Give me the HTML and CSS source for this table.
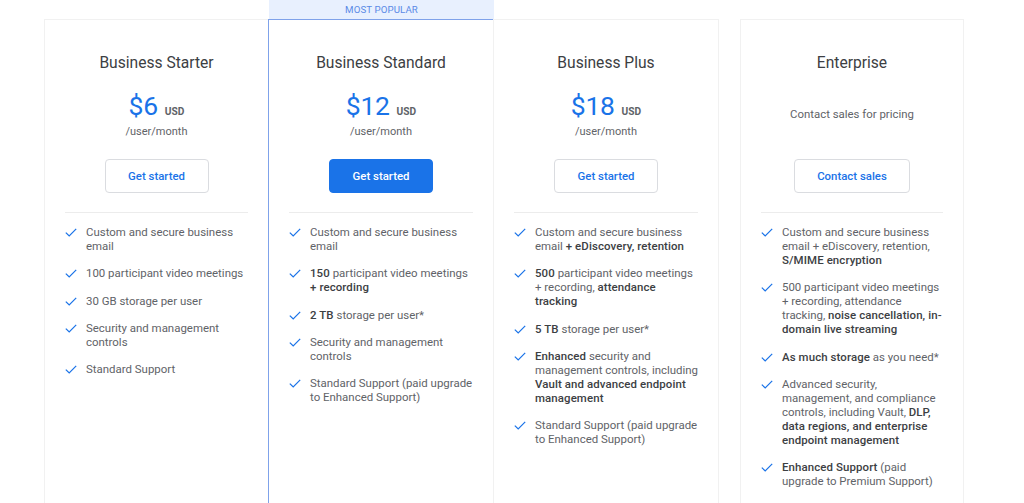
FILE: index.html
```html
<!DOCTYPE html>
<html lang="en">
<head>
<meta charset="utf-8">
<title>Plans</title>
<link rel="stylesheet" href="styles.css">
</head>
<body>
<svg width="0" height="0" class="defs" aria-hidden="true">
  <symbol id="chk" viewBox="0 0 12 9"><path d="M0.8 4.6 L4.2 7.9 L11.2 0.9" fill="none" stroke="#1a73e8" stroke-width="1.25"/></symbol>
</svg>
<main class="plans">
  <section class="col">
    <div class="flag"></div>
    <div class="card">
      <h2 class="title">Business Starter</h2>
      <div class="price"><div class="amount-row"><span class="amount">$6</span><span class="cur">USD</span></div><div class="per">/user/month</div></div>
      <a class="btn">Get started</a>
      <ul class="features">
        <li><svg class="check"><use href="#chk"/></svg><span>Custom and secure business email</span></li>
        <li><svg class="check"><use href="#chk"/></svg><span>100 participant video meetings</span></li>
        <li><svg class="check"><use href="#chk"/></svg><span>30 GB storage per user</span></li>
        <li><svg class="check"><use href="#chk"/></svg><span>Security and management controls</span></li>
        <li><svg class="check"><use href="#chk"/></svg><span>Standard Support</span></li>
      </ul>
    </div>
  </section>
  <section class="col popular">
    <div class="flag">MOST POPULAR</div>
    <div class="card">
      <h2 class="title">Business Standard</h2>
      <div class="price"><div class="amount-row"><span class="amount">$12</span><span class="cur">USD</span></div><div class="per">/user/month</div></div>
      <a class="btn primary">Get started</a>
      <ul class="features">
        <li><svg class="check"><use href="#chk"/></svg><span>Custom and secure business email</span></li>
        <li><svg class="check"><use href="#chk"/></svg><span><b>150</b> participant video meetings <b>+ recording</b></span></li>
        <li><svg class="check"><use href="#chk"/></svg><span><b>2 TB</b> storage per user*</span></li>
        <li><svg class="check"><use href="#chk"/></svg><span>Security and management controls</span></li>
        <li><svg class="check"><use href="#chk"/></svg><span>Standard Support (paid upgrade to Enhanced Support)</span></li>
      </ul>
    </div>
  </section>
  <section class="col">
    <div class="flag"></div>
    <div class="card">
      <h2 class="title">Business Plus</h2>
      <div class="price"><div class="amount-row"><span class="amount">$18</span><span class="cur">USD</span></div><div class="per">/user/month</div></div>
      <a class="btn">Get started</a>
      <ul class="features">
        <li><svg class="check"><use href="#chk"/></svg><span>Custom and secure business email <b>+ eDiscovery, retention</b></span></li>
        <li><svg class="check"><use href="#chk"/></svg><span><b>500</b> participant video meetings + recording, <b>attendance tracking</b></span></li>
        <li><svg class="check"><use href="#chk"/></svg><span><b>5 TB</b> storage per user*</span></li>
        <li><svg class="check"><use href="#chk"/></svg><span><b>Enhanced</b> security and management controls, including <b>Vault and advanced endpoint management</b></span></li>
        <li><svg class="check"><use href="#chk"/></svg><span>Standard Support (paid upgrade to Enhanced Support)</span></li>
      </ul>
    </div>
  </section>
  <section class="col enterprise">
    <div class="flag"></div>
    <div class="card">
      <h2 class="title">Enterprise</h2>
      <div class="price"><div class="contact">Contact sales for pricing</div></div>
      <a class="btn">Contact sales</a>
      <ul class="features">
        <li><svg class="check"><use href="#chk"/></svg><span>Custom and secure business email + eDiscovery, retention, <b>S/MIME encryption</b></span></li>
        <li><svg class="check"><use href="#chk"/></svg><span>500 participant video meetings + recording, attendance tracking, <b>noise cancellation, in-domain live streaming</b></span></li>
        <li><svg class="check"><use href="#chk"/></svg><span><b>As much storage</b> as you need*</span></li>
        <li><svg class="check"><use href="#chk"/></svg><span>Advanced security, management, and compliance controls, including Vault, <b>DLP, data regions, and enterprise endpoint management</b></span></li>
        <li><svg class="check"><use href="#chk"/></svg><span><b>Enhanced Support</b> (paid upgrade to Premium Support)</span></li>
      </ul>
    </div>
  </section>
</main>
</body>
</html>
```
FILE: styles.css
```css
html, body { margin: 0; padding: 0; background: #fff; overflow: hidden; }
body { font-family: Roboto, "Liberation Sans", Arial, sans-serif; color: #5f6368; }
.defs { position: absolute; }
.plans { display: flex; padding-left: 44px; align-items: stretch; }
.col { width: 225px; display: flex; flex-direction: column; }
.col.enterprise { margin-left: 21px; width: 224px; }
.flag { height: 19px; box-sizing: border-box; font-size: 9.7px; line-height: 19px; text-align: center; color: #5a8ae6; letter-spacing: 0.1px; }
.popular .flag { background: #e8f0fe; }
.card { flex: 1; border: 1px solid #f1f1f1; background: #fff; padding: 33px 20px 60px 20px; display: flex; flex-direction: column; align-items: center; }
.popular .card { border-color: #7fa2ea; }
.col + .col .card { margin-left: -1px; }
.col.enterprise .card { margin-left: 0; }
.title { margin: 0; font-size: 15.6px; line-height: 20px; font-weight: 400; color: #3c4043; text-align: center; }
.price { height: 48px; margin-top: 18px; display: flex; flex-direction: column; align-items: center; justify-content: center; }
.amount-row { display: flex; align-items: baseline; line-height: 30px; height: 30px; }
.amount { font-size: 26.5px; color: #1a73e8; letter-spacing: -0.3px; }
.cur { font-size: 10.2px; font-weight: 700; color: #5f6368; margin-left: 7px; }
.per { margin-top: 4px; font-size: 11px; line-height: 14px; color: #5f6368; }
.contact { font-size: 11.4px; line-height: 14px; color: #5f6368; margin-bottom: 3px; }
.btn { margin-top: 20px; height: 34px; box-sizing: border-box; padding: 0 21px; display: flex; align-items: center; justify-content: center; border: 1px solid #dadce0; border-radius: 4px; color: #1a73e8; font-size: 11.4px; font-weight: 500; }
.col:first-child .btn, .col:nth-child(3) .btn { width: 104px; }
.enterprise .btn { width: 116px; }
.btn.primary { background: #1a73e8; border-color: #1a73e8; color: #fff; width: 104px; }
.features { list-style: none; margin: 19px 0 0 0; padding: 12px 0 0 0; border-top: 1px solid #ececec; align-self: stretch; }
.features li { display: flex; align-items: flex-start; font-size: 11.45px; line-height: 14px; margin-bottom: 13.3px; color: #5f6368; }
.features li span { margin-right: -2px; }
.features li b { font-weight: 500; color: #3c4043; letter-spacing: 0.1px; }
.check { width: 12px; height: 9px; flex: none; margin: 3px 9px 0 0; }
```
